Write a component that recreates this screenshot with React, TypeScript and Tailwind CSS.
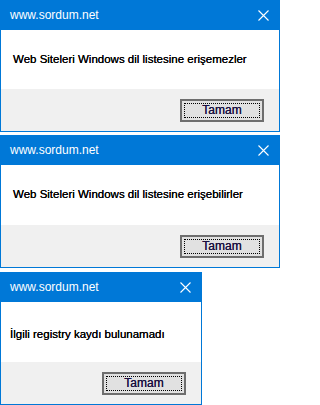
import React from 'react';

type Box = {
  message: string;
  width: string;
  textPad: string;
  bodyH: string;
};

const boxes: Box[] = [
  { message: 'Web Siteleri Windows dil listesine erişemezler', width: 'w-[280px]', textPad: 'pl-[12px]', bodyH: 'h-[59px]' },
  { message: 'Web Siteleri Windows dil listesine erişebilirler', width: 'w-[280px]', textPad: 'pl-[12px]', bodyH: 'h-[60px]' },
  { message: 'İlgili registry kaydı bulunamadı', width: 'w-[202px]', textPad: 'pl-[9px] pt-[5px]', bodyH: 'h-[60px]' },
];

// thin windows 10 close glyph
function CloseIcon() {
  return (
    <svg width="11" height="11" viewBox="0 0 11 11" className="block">
      <path d="M0.5 0.5 L10.5 10.5 M10.5 0.5 L0.5 10.5" stroke="#ffffff" strokeWidth="1.1" fill="none" />
    </svg>
  );
}

function MessageBox({ box }: { box: Box }) {
  return (
    <div className={`${box.width} flex flex-col border border-t-0 border-[#0078d7] bg-white`}>
      <div className="h-[30px] flex items-center justify-between bg-[#0078d7] pl-[9px] pr-[10px]">
        <span className="text-[12px] text-white font-['Liberation_Sans',Arial,sans-serif]">www.sordum.net</span>
        <CloseIcon />
      </div>
      <div className={`${box.bodyH} flex items-center ${box.textPad}`}>
        <span className="text-[11.5px] text-black font-['Liberation_Sans',Arial,sans-serif] [text-shadow:0_0_0.4px_#000]">
          {box.message}
        </span>
      </div>
      <div className="h-[42px] flex items-center justify-end bg-[#f0f0f0] pr-[15px]">
        <button className="w-[84px] h-[23px] border-2 border-[#6e6e6e] bg-[#e1e1e1] p-[2px] flex">
          <span className="flex-1 flex items-center justify-center border border-dotted border-black text-[12px] leading-none text-[#1a1040] font-['Liberation_Sans',Arial,sans-serif] [text-shadow:0_0_0.4px_#1a1040]">
            Tamam
          </span>
        </button>
      </div>
    </div>
  );
}

export default function App() {
  return (
    <div className="w-[280px] h-[405px] bg-white flex flex-col">
      <MessageBox box={boxes[0]} />
      <div className="h-[3px]" />
      <MessageBox box={boxes[1]} />
      <div className="h-[4px]" />
      <MessageBox box={boxes[2]} />
    </div>
  );
}
